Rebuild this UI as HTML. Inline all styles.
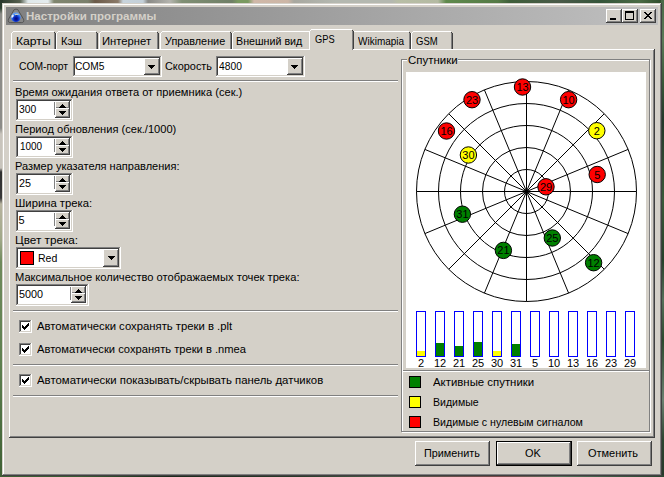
<!DOCTYPE html>
<html lang="ru"><head><meta charset="utf-8"><title>Настройки программы</title>
<style>
html,body{margin:0;padding:0}
body{width:664px;height:477px;overflow:hidden;position:relative;background:#6f7a62;font-family:"Liberation Sans", sans-serif;font-size:11px;color:#000}
.a{position:absolute}
.t{position:absolute;white-space:nowrap;line-height:14px;height:14px;transform-origin:0 50%}
svg{overflow:visible}
svg text{font-family:"Liberation Sans", sans-serif}
</style></head><body>
<div class="a" style="left:0;top:0;width:664px;height:477px;background:#4a6040"></div>
<div class="a" style="left:0;top:0;width:664px;height:4px;background:linear-gradient(to right,#2a382c 0,#566050 20px,#dfe8ea 28px,#e4ecee 48px,#80866f 54px,#7a806c 88px,#6b5a48 95px,#8a7a68 118px,#c8d4dc 123px,#c4d0d8 143px,#8a8a86 148px,#b4b4ae 170px,#808f74 182px,#6f7f66 232px,#7a9a60 238px,#7a9a60 248px,#d0b8a8 254px,#ccb6a6 288px,#a8a8a0 294px,#b4b8b0 335px,#b4b8b0 392px,#b8bea6 398px,#b4baa2 438px,#5f8a4c 446px,#557a46 498px,#3f5f3a 510px,#4a5a48 560px,#35553a 600px,#4a6a44 640px,#2c4a2a 664px)"></div>
<div class="a" style="left:0;top:0;width:3px;height:477px;background:linear-gradient(to bottom,#2a382c 0,#2c4030 8px,#8c8c88 14px,#8c8c88 128px,#c8c4bc 134px,#c8c4bc 168px,#303030 172px,#383838 198px,#b8b4a0 204px,#a0a888 240px,#6f8a5c 262px,#5f8050 360px,#3f6034 477px)"></div>
<div class="a" style="left:661px;top:0;width:3px;height:477px;background:linear-gradient(to bottom,#4a6a48 0,#5a7a58 40px,#3a5a3a 80px,#24382a 120px,#3a5a3a 200px,#26402a 260px,#55705a 300px,#2c4a2e 340px,#6a8070 400px,#2c4430 440px,#26382a 477px)"></div>
<div class="a" style="left:0;top:475px;width:664px;height:2px;background:linear-gradient(to right,#3f6034 0,#3a5a34 80px,#1c2a1c 170px,#2a3a2a 300px,#4a5a48 380px,#7a4a4a 500px,#55705a 560px,#2c4430 664px)"></div>
<div class="a" style="left:2px;top:3px;width:660px;height:473px;background:#d4d0c8;box-shadow:inset -1px -1px 0 #404040, inset 1px 1px 0 #d4d0c8, inset -2px -2px 0 #808080, inset 2px 2px 0 #ffffff;"></div>
<div class="a" style="left:6px;top:7px;width:652px;height:18px;background:linear-gradient(to right,#808080,#c0c0c0)"></div>
<svg class="a" style="left:8px;top:8px" width="16" height="16" viewBox="0 0 16 16"><defs><radialGradient id="gl" cx="0.52" cy="0.66" r="0.6"><stop offset="0" stop-color="#04086c"/><stop offset="0.35" stop-color="#0a1eb0"/><stop offset="0.7" stop-color="#2468f0"/><stop offset="1" stop-color="#6aa8fa"/></radialGradient></defs><path d="M4.9 3.8 Q5.6 1.1 8 1.1 Q10.4 1.1 11.1 3.8 L15.5 11.2 Q16.6 14.6 13.4 14.6 L2.6 14.6 Q-0.6 14.6 0.5 11.2 Z" fill="#868686" stroke="#484848" stroke-width="0.8"/><circle cx="7.9" cy="9.3" r="4.8" fill="url(#gl)"/><path d="M3.3 9.2 Q3.4 7.2 5 6.6 Q6 6.8 5.8 7.8 Q5.6 8.8 4.6 9.4 Q3.8 10 3.3 9.2Z" fill="#f4f8ff" opacity="0.95"/><path d="M6.4 6.3 Q8 5.6 10.4 6 Q11 6.6 10.2 7 Q9 6.6 8 7 Q7 7.2 6.4 6.3Z" fill="#e6e2c0" opacity="0.9"/><circle cx="8.7" cy="7.6" r="0.7" fill="#1a2a60" opacity="0.8"/></svg>
<div class="a" style="left:606px;top:9px;width:16px;height:14px;background:#d4d0c8;box-shadow:inset -1px -1px 0 #404040, inset 1px 1px 0 #ffffff, inset -2px -2px 0 #808080, inset 2px 2px 0 #d4d0c8;"></div>
<div class="a" style="left:622px;top:9px;width:16px;height:14px;background:#d4d0c8;box-shadow:inset -1px -1px 0 #404040, inset 1px 1px 0 #ffffff, inset -2px -2px 0 #808080, inset 2px 2px 0 #d4d0c8;"></div>
<div class="a" style="left:640px;top:9px;width:16px;height:14px;background:#d4d0c8;box-shadow:inset -1px -1px 0 #404040, inset 1px 1px 0 #ffffff, inset -2px -2px 0 #808080, inset 2px 2px 0 #d4d0c8;"></div>
<div class="a" style="left:610px;top:18px;width:6px;height:2px;background:#000"></div>
<div class="a" style="left:625px;top:11px;width:9px;height:9px;box-sizing:border-box;border:1px solid #000;border-top-width:2px"></div>
<svg class="a" style="left:644px;top:12px" width="8" height="7" viewBox="0 0 8 7" shape-rendering="crispEdges"><path d="M0 0h2v1h1v1h2v-1h1v-1h2v1h-1v1h-1v1h-1v1h1v1h1v1h1v1h-2v-1h-1v-1h-2v1h-1v1h-2v-1h1v-1h1v-1h1v-1h-1v-1h-1v-1h-1z" fill="#000"/></svg>
<div class="a" style="left:9px;top:49px;width:646px;height:389px;background:#d4d0c8;box-shadow:inset -1px -1px 0 #404040, inset 1px 1px 0 #ffffff, inset -2px -2px 0 #808080, inset 2px 2px 0 #d4d0c8;"></div>
<div class="a" style="left:11px;top:31px;width:45px;height:18px;z-index:1"><div class="a" style="left:2px;top:1px;right:2px;bottom:0;background:#d4d0c8"></div><div class="a" style="left:0;top:2px;width:1px;bottom:0px;background:#ffffff"></div><div class="a" style="left:1px;top:1px;width:1px;height:1px;background:#ffffff"></div><div class="a" style="left:1px;top:2px;width:1px;bottom:0;background:#d4d0c8"></div><div class="a" style="left:2px;top:0;right:2px;height:1px;background:#ffffff"></div><div class="a" style="right:1px;top:1px;width:1px;height:1px;background:#404040"></div><div class="a" style="right:0;top:2px;width:1px;bottom:0px;background:#404040"></div><div class="a" style="right:1px;top:2px;width:1px;bottom:0px;background:#808080"></div></div>
<div class="a" style="left:56px;top:31px;width:42px;height:18px;z-index:1"><div class="a" style="left:2px;top:1px;right:2px;bottom:0;background:#d4d0c8"></div><div class="a" style="left:0;top:2px;width:1px;bottom:0px;background:#ffffff"></div><div class="a" style="left:1px;top:1px;width:1px;height:1px;background:#ffffff"></div><div class="a" style="left:1px;top:2px;width:1px;bottom:0;background:#d4d0c8"></div><div class="a" style="left:2px;top:0;right:2px;height:1px;background:#ffffff"></div><div class="a" style="right:1px;top:1px;width:1px;height:1px;background:#404040"></div><div class="a" style="right:0;top:2px;width:1px;bottom:0px;background:#404040"></div><div class="a" style="right:1px;top:2px;width:1px;bottom:0px;background:#808080"></div></div>
<div class="a" style="left:99px;top:31px;width:60px;height:18px;z-index:1"><div class="a" style="left:2px;top:1px;right:2px;bottom:0;background:#d4d0c8"></div><div class="a" style="left:0;top:2px;width:1px;bottom:0px;background:#ffffff"></div><div class="a" style="left:1px;top:1px;width:1px;height:1px;background:#ffffff"></div><div class="a" style="left:1px;top:2px;width:1px;bottom:0;background:#d4d0c8"></div><div class="a" style="left:2px;top:0;right:2px;height:1px;background:#ffffff"></div><div class="a" style="right:1px;top:1px;width:1px;height:1px;background:#404040"></div><div class="a" style="right:0;top:2px;width:1px;bottom:0px;background:#404040"></div><div class="a" style="right:1px;top:2px;width:1px;bottom:0px;background:#808080"></div></div>
<div class="a" style="left:160px;top:31px;width:72px;height:18px;z-index:1"><div class="a" style="left:2px;top:1px;right:2px;bottom:0;background:#d4d0c8"></div><div class="a" style="left:0;top:2px;width:1px;bottom:0px;background:#ffffff"></div><div class="a" style="left:1px;top:1px;width:1px;height:1px;background:#ffffff"></div><div class="a" style="left:1px;top:2px;width:1px;bottom:0;background:#d4d0c8"></div><div class="a" style="left:2px;top:0;right:2px;height:1px;background:#ffffff"></div><div class="a" style="right:1px;top:1px;width:1px;height:1px;background:#404040"></div><div class="a" style="right:0;top:2px;width:1px;bottom:0px;background:#404040"></div><div class="a" style="right:1px;top:2px;width:1px;bottom:0px;background:#808080"></div></div>
<div class="a" style="left:232px;top:31px;width:79px;height:18px;z-index:1"><div class="a" style="left:2px;top:1px;right:2px;bottom:0;background:#d4d0c8"></div><div class="a" style="left:0;top:2px;width:1px;bottom:0px;background:#ffffff"></div><div class="a" style="left:1px;top:1px;width:1px;height:1px;background:#ffffff"></div><div class="a" style="left:1px;top:2px;width:1px;bottom:0;background:#d4d0c8"></div><div class="a" style="left:2px;top:0;right:2px;height:1px;background:#ffffff"></div><div class="a" style="right:1px;top:1px;width:1px;height:1px;background:#404040"></div><div class="a" style="right:0;top:2px;width:1px;bottom:0px;background:#404040"></div><div class="a" style="right:1px;top:2px;width:1px;bottom:0px;background:#808080"></div></div>
<div class="a" style="left:309px;top:29px;width:45px;height:22px;z-index:5"><div class="a" style="left:2px;top:1px;right:2px;bottom:0;background:#d4d0c8"></div><div class="a" style="left:0;top:2px;width:1px;bottom:2px;background:#ffffff"></div><div class="a" style="left:1px;top:1px;width:1px;height:1px;background:#ffffff"></div><div class="a" style="left:1px;top:2px;width:1px;bottom:0;background:#d4d0c8"></div><div class="a" style="left:2px;top:0;right:2px;height:1px;background:#ffffff"></div><div class="a" style="right:1px;top:1px;width:1px;height:1px;background:#404040"></div><div class="a" style="right:0;top:2px;width:1px;bottom:2px;background:#404040"></div><div class="a" style="right:1px;top:2px;width:1px;bottom:1px;background:#808080"></div></div>
<div class="a" style="left:352px;top:31px;width:59px;height:18px;z-index:1"><div class="a" style="left:2px;top:1px;right:2px;bottom:0;background:#d4d0c8"></div><div class="a" style="left:0;top:2px;width:1px;bottom:0px;background:#ffffff"></div><div class="a" style="left:1px;top:1px;width:1px;height:1px;background:#ffffff"></div><div class="a" style="left:1px;top:2px;width:1px;bottom:0;background:#d4d0c8"></div><div class="a" style="left:2px;top:0;right:2px;height:1px;background:#ffffff"></div><div class="a" style="right:1px;top:1px;width:1px;height:1px;background:#404040"></div><div class="a" style="right:0;top:2px;width:1px;bottom:0px;background:#404040"></div><div class="a" style="right:1px;top:2px;width:1px;bottom:0px;background:#808080"></div></div>
<div class="a" style="left:411px;top:31px;width:42px;height:18px;z-index:1"><div class="a" style="left:2px;top:1px;right:2px;bottom:0;background:#d4d0c8"></div><div class="a" style="left:0;top:2px;width:1px;bottom:0px;background:#ffffff"></div><div class="a" style="left:1px;top:1px;width:1px;height:1px;background:#ffffff"></div><div class="a" style="left:1px;top:2px;width:1px;bottom:0;background:#d4d0c8"></div><div class="a" style="left:2px;top:0;right:2px;height:1px;background:#ffffff"></div><div class="a" style="right:1px;top:1px;width:1px;height:1px;background:#404040"></div><div class="a" style="right:0;top:2px;width:1px;bottom:0px;background:#404040"></div><div class="a" style="right:1px;top:2px;width:1px;bottom:0px;background:#808080"></div></div>
<div class="a" style="left:73px;top:56px;width:89px;height:21px;background:#fff;box-shadow:inset -1px -1px 0 #ffffff, inset 1px 1px 0 #808080, inset -2px -2px 0 #d4d0c8, inset 2px 2px 0 #404040;"></div>
<div class="a" style="left:144px;top:58px;width:16px;height:17px;background:#d4d0c8;box-shadow:inset -1px -1px 0 #404040, inset 1px 1px 0 #ffffff, inset -2px -2px 0 #808080, inset 2px 2px 0 #d4d0c8;"></div>
<div class="a" style="left:148px;top:65px;width:7px;height:1px;background:#000"></div><div class="a" style="left:149px;top:66px;width:5px;height:1px;background:#000"></div><div class="a" style="left:150px;top:67px;width:3px;height:1px;background:#000"></div><div class="a" style="left:151px;top:68px;width:1px;height:1px;background:#000"></div>
<div class="a" style="left:216px;top:56px;width:89px;height:21px;background:#fff;box-shadow:inset -1px -1px 0 #ffffff, inset 1px 1px 0 #808080, inset -2px -2px 0 #d4d0c8, inset 2px 2px 0 #404040;"></div>
<div class="a" style="left:287px;top:58px;width:16px;height:17px;background:#d4d0c8;box-shadow:inset -1px -1px 0 #404040, inset 1px 1px 0 #ffffff, inset -2px -2px 0 #808080, inset 2px 2px 0 #d4d0c8;"></div>
<div class="a" style="left:291px;top:65px;width:7px;height:1px;background:#000"></div><div class="a" style="left:292px;top:66px;width:5px;height:1px;background:#000"></div><div class="a" style="left:293px;top:67px;width:3px;height:1px;background:#000"></div><div class="a" style="left:294px;top:68px;width:1px;height:1px;background:#000"></div>
<div class="a" style="left:13px;top:80px;width:385px;height:1px;background:#808080"></div>
<div class="a" style="left:13px;top:81px;width:385px;height:1px;background:#ffffff"></div>
<div class="a" style="left:16px;top:99px;width:57px;height:22px;background:#fff;box-shadow:inset -1px -1px 0 #ffffff, inset 1px 1px 0 #808080, inset -2px -2px 0 #d4d0c8, inset 2px 2px 0 #404040;"></div>
<div class="a" style="left:54px;top:102px;width:1px;height:13px;background:#808080"></div>
<div class="a" style="left:55px;top:101px;width:15px;height:8px;background:#d4d0c8;box-shadow:inset -1px -1px 0 #404040, inset 1px 1px 0 #ffffff, inset -2px -2px 0 #808080, inset 2px 2px 0 #d4d0c8;"></div>
<div class="a" style="left:55px;top:108px;width:15px;height:10px;background:#d4d0c8;box-shadow:inset -1px -1px 0 #404040, inset 1px 1px 0 #ffffff, inset -2px -2px 0 #808080, inset 2px 2px 0 #d4d0c8;"></div>
<div class="a" style="left:62px;top:104px;width:1px;height:1px;background:#000"></div><div class="a" style="left:61px;top:105px;width:3px;height:1px;background:#000"></div><div class="a" style="left:60px;top:106px;width:5px;height:1px;background:#000"></div><div class="a" style="left:59px;top:107px;width:7px;height:1px;background:#000"></div>
<div class="a" style="left:59px;top:111px;width:7px;height:1px;background:#000"></div><div class="a" style="left:60px;top:112px;width:5px;height:1px;background:#000"></div><div class="a" style="left:61px;top:113px;width:3px;height:1px;background:#000"></div><div class="a" style="left:62px;top:114px;width:1px;height:1px;background:#000"></div>
<div class="a" style="left:16px;top:136px;width:57px;height:22px;background:#fff;box-shadow:inset -1px -1px 0 #ffffff, inset 1px 1px 0 #808080, inset -2px -2px 0 #d4d0c8, inset 2px 2px 0 #404040;"></div>
<div class="a" style="left:54px;top:139px;width:1px;height:13px;background:#808080"></div>
<div class="a" style="left:55px;top:138px;width:15px;height:8px;background:#d4d0c8;box-shadow:inset -1px -1px 0 #404040, inset 1px 1px 0 #ffffff, inset -2px -2px 0 #808080, inset 2px 2px 0 #d4d0c8;"></div>
<div class="a" style="left:55px;top:145px;width:15px;height:10px;background:#d4d0c8;box-shadow:inset -1px -1px 0 #404040, inset 1px 1px 0 #ffffff, inset -2px -2px 0 #808080, inset 2px 2px 0 #d4d0c8;"></div>
<div class="a" style="left:62px;top:141px;width:1px;height:1px;background:#000"></div><div class="a" style="left:61px;top:142px;width:3px;height:1px;background:#000"></div><div class="a" style="left:60px;top:143px;width:5px;height:1px;background:#000"></div><div class="a" style="left:59px;top:144px;width:7px;height:1px;background:#000"></div>
<div class="a" style="left:59px;top:148px;width:7px;height:1px;background:#000"></div><div class="a" style="left:60px;top:149px;width:5px;height:1px;background:#000"></div><div class="a" style="left:61px;top:150px;width:3px;height:1px;background:#000"></div><div class="a" style="left:62px;top:151px;width:1px;height:1px;background:#000"></div>
<div class="a" style="left:16px;top:173px;width:57px;height:22px;background:#fff;box-shadow:inset -1px -1px 0 #ffffff, inset 1px 1px 0 #808080, inset -2px -2px 0 #d4d0c8, inset 2px 2px 0 #404040;"></div>
<div class="a" style="left:54px;top:176px;width:1px;height:13px;background:#808080"></div>
<div class="a" style="left:55px;top:175px;width:15px;height:8px;background:#d4d0c8;box-shadow:inset -1px -1px 0 #404040, inset 1px 1px 0 #ffffff, inset -2px -2px 0 #808080, inset 2px 2px 0 #d4d0c8;"></div>
<div class="a" style="left:55px;top:182px;width:15px;height:10px;background:#d4d0c8;box-shadow:inset -1px -1px 0 #404040, inset 1px 1px 0 #ffffff, inset -2px -2px 0 #808080, inset 2px 2px 0 #d4d0c8;"></div>
<div class="a" style="left:62px;top:178px;width:1px;height:1px;background:#000"></div><div class="a" style="left:61px;top:179px;width:3px;height:1px;background:#000"></div><div class="a" style="left:60px;top:180px;width:5px;height:1px;background:#000"></div><div class="a" style="left:59px;top:181px;width:7px;height:1px;background:#000"></div>
<div class="a" style="left:59px;top:185px;width:7px;height:1px;background:#000"></div><div class="a" style="left:60px;top:186px;width:5px;height:1px;background:#000"></div><div class="a" style="left:61px;top:187px;width:3px;height:1px;background:#000"></div><div class="a" style="left:62px;top:188px;width:1px;height:1px;background:#000"></div>
<div class="a" style="left:16px;top:210px;width:57px;height:22px;background:#fff;box-shadow:inset -1px -1px 0 #ffffff, inset 1px 1px 0 #808080, inset -2px -2px 0 #d4d0c8, inset 2px 2px 0 #404040;"></div>
<div class="a" style="left:54px;top:213px;width:1px;height:13px;background:#808080"></div>
<div class="a" style="left:55px;top:212px;width:15px;height:8px;background:#d4d0c8;box-shadow:inset -1px -1px 0 #404040, inset 1px 1px 0 #ffffff, inset -2px -2px 0 #808080, inset 2px 2px 0 #d4d0c8;"></div>
<div class="a" style="left:55px;top:219px;width:15px;height:10px;background:#d4d0c8;box-shadow:inset -1px -1px 0 #404040, inset 1px 1px 0 #ffffff, inset -2px -2px 0 #808080, inset 2px 2px 0 #d4d0c8;"></div>
<div class="a" style="left:62px;top:215px;width:1px;height:1px;background:#000"></div><div class="a" style="left:61px;top:216px;width:3px;height:1px;background:#000"></div><div class="a" style="left:60px;top:217px;width:5px;height:1px;background:#000"></div><div class="a" style="left:59px;top:218px;width:7px;height:1px;background:#000"></div>
<div class="a" style="left:59px;top:222px;width:7px;height:1px;background:#000"></div><div class="a" style="left:60px;top:223px;width:5px;height:1px;background:#000"></div><div class="a" style="left:61px;top:224px;width:3px;height:1px;background:#000"></div><div class="a" style="left:62px;top:225px;width:1px;height:1px;background:#000"></div>
<div class="a" style="left:16px;top:247px;width:105px;height:22px;background:#fff;box-shadow:inset -1px -1px 0 #ffffff, inset 1px 1px 0 #808080, inset -2px -2px 0 #d4d0c8, inset 2px 2px 0 #404040;"></div>
<div class="a" style="left:20px;top:251px;width:14px;height:14px;box-sizing:border-box;border:1px solid #000;background:#f00"></div>
<div class="a" style="left:103px;top:249px;width:16px;height:18px;background:#d4d0c8;box-shadow:inset -1px -1px 0 #404040, inset 1px 1px 0 #ffffff, inset -2px -2px 0 #808080, inset 2px 2px 0 #d4d0c8;"></div>
<div class="a" style="left:108px;top:256px;width:7px;height:1px;background:#000"></div><div class="a" style="left:109px;top:257px;width:5px;height:1px;background:#000"></div><div class="a" style="left:110px;top:258px;width:3px;height:1px;background:#000"></div><div class="a" style="left:111px;top:259px;width:1px;height:1px;background:#000"></div>
<div class="a" style="left:16px;top:284px;width:73px;height:22px;background:#fff;box-shadow:inset -1px -1px 0 #ffffff, inset 1px 1px 0 #808080, inset -2px -2px 0 #d4d0c8, inset 2px 2px 0 #404040;"></div>
<div class="a" style="left:70px;top:287px;width:1px;height:13px;background:#808080"></div>
<div class="a" style="left:71px;top:286px;width:15px;height:8px;background:#d4d0c8;box-shadow:inset -1px -1px 0 #404040, inset 1px 1px 0 #ffffff, inset -2px -2px 0 #808080, inset 2px 2px 0 #d4d0c8;"></div>
<div class="a" style="left:71px;top:293px;width:15px;height:10px;background:#d4d0c8;box-shadow:inset -1px -1px 0 #404040, inset 1px 1px 0 #ffffff, inset -2px -2px 0 #808080, inset 2px 2px 0 #d4d0c8;"></div>
<div class="a" style="left:78px;top:289px;width:1px;height:1px;background:#000"></div><div class="a" style="left:77px;top:290px;width:3px;height:1px;background:#000"></div><div class="a" style="left:76px;top:291px;width:5px;height:1px;background:#000"></div><div class="a" style="left:75px;top:292px;width:7px;height:1px;background:#000"></div>
<div class="a" style="left:75px;top:296px;width:7px;height:1px;background:#000"></div><div class="a" style="left:76px;top:297px;width:5px;height:1px;background:#000"></div><div class="a" style="left:77px;top:298px;width:3px;height:1px;background:#000"></div><div class="a" style="left:78px;top:299px;width:1px;height:1px;background:#000"></div>
<div class="a" style="left:13px;top:310px;width:385px;height:1px;background:#808080"></div>
<div class="a" style="left:13px;top:311px;width:385px;height:1px;background:#ffffff"></div>
<div class="a" style="left:19px;top:320px;width:13px;height:13px;background:#fff;box-shadow:inset -1px -1px 0 #ffffff, inset 1px 1px 0 #808080, inset -2px -2px 0 #d4d0c8, inset 2px 2px 0 #404040;"></div>
<svg class="a" style="left:22px;top:323px" width="7" height="7" viewBox="0 0 7 7"><path d="M0 2v3l2 2 5-5v-3l-5 5z" fill="#000" shape-rendering="crispEdges"/></svg>
<div class="a" style="left:19px;top:343px;width:13px;height:13px;background:#fff;box-shadow:inset -1px -1px 0 #ffffff, inset 1px 1px 0 #808080, inset -2px -2px 0 #d4d0c8, inset 2px 2px 0 #404040;"></div>
<svg class="a" style="left:22px;top:346px" width="7" height="7" viewBox="0 0 7 7"><path d="M0 2v3l2 2 5-5v-3l-5 5z" fill="#000" shape-rendering="crispEdges"/></svg>
<div class="a" style="left:13px;top:364px;width:385px;height:1px;background:#808080"></div>
<div class="a" style="left:13px;top:365px;width:385px;height:1px;background:#ffffff"></div>
<div class="a" style="left:19px;top:374px;width:13px;height:13px;background:#fff;box-shadow:inset -1px -1px 0 #ffffff, inset 1px 1px 0 #808080, inset -2px -2px 0 #d4d0c8, inset 2px 2px 0 #404040;"></div>
<svg class="a" style="left:22px;top:377px" width="7" height="7" viewBox="0 0 7 7"><path d="M0 2v3l2 2 5-5v-3l-5 5z" fill="#000" shape-rendering="crispEdges"/></svg>
<div class="a" style="left:13px;top:395px;width:385px;height:1px;background:#808080"></div>
<div class="a" style="left:13px;top:396px;width:385px;height:1px;background:#ffffff"></div>
<div class="a" style="left:401px;top:59px;width:249px;height:373px;box-sizing:border-box;border:1px solid #808080;box-shadow:1px 1px 0 #ffffff, inset 1px 1px 0 #ffffff"></div>
<div class="a" style="left:407px;top:53px;width:51px;height:13px;background:#d4d0c8"></div>
<div class="a" style="left:406px;top:72px;width:240px;height:296px;background:#fff"></div>
<svg class="a" style="left:406px;top:71px" width="242" height="299" viewBox="406 71 242 299"><g fill="none" stroke="#000" stroke-width="1"><circle cx="526.5" cy="191.5" r="22"/><circle cx="526.5" cy="191.5" r="44"/><circle cx="526.5" cy="191.5" r="66"/><circle cx="526.5" cy="191.5" r="88"/><circle cx="526.5" cy="191.5" r="110"/><line x1="526.5" y1="191.5" x2="636.50" y2="191.50"/><line x1="526.5" y1="191.5" x2="628.13" y2="149.40"/><line x1="526.5" y1="191.5" x2="604.28" y2="113.72"/><line x1="526.5" y1="191.5" x2="568.60" y2="89.87"/><line x1="526.5" y1="191.5" x2="526.50" y2="81.50"/><line x1="526.5" y1="191.5" x2="484.40" y2="89.87"/><line x1="526.5" y1="191.5" x2="448.72" y2="113.72"/><line x1="526.5" y1="191.5" x2="424.87" y2="149.40"/><line x1="526.5" y1="191.5" x2="416.50" y2="191.50"/><line x1="526.5" y1="191.5" x2="424.87" y2="233.60"/><line x1="526.5" y1="191.5" x2="448.72" y2="269.28"/><line x1="526.5" y1="191.5" x2="484.40" y2="293.13"/><line x1="526.5" y1="191.5" x2="526.50" y2="301.50"/><line x1="526.5" y1="191.5" x2="568.60" y2="293.13"/><line x1="526.5" y1="191.5" x2="604.28" y2="269.28"/><line x1="526.5" y1="191.5" x2="628.13" y2="233.60"/></g><circle cx="522.5" cy="87" r="8.2" fill="#ff0000" stroke="#000" stroke-width="1"/><text x="522.5" y="91" text-anchor="middle" font-size="11" font-family='"Liberation Sans", sans-serif' fill="#000">13</text><circle cx="472" cy="99.7" r="8.2" fill="#ff0000" stroke="#000" stroke-width="1"/><text x="472" y="103.7" text-anchor="middle" font-size="11" font-family='"Liberation Sans", sans-serif' fill="#000">23</text><circle cx="568.6" cy="99.7" r="8.2" fill="#ff0000" stroke="#000" stroke-width="1"/><text x="568.6" y="103.7" text-anchor="middle" font-size="11" font-family='"Liberation Sans", sans-serif' fill="#000">10</text><circle cx="446.5" cy="131" r="8.2" fill="#ff0000" stroke="#000" stroke-width="1"/><text x="446.5" y="135" text-anchor="middle" font-size="11" font-family='"Liberation Sans", sans-serif' fill="#000">16</text><circle cx="596.8" cy="130.7" r="8.2" fill="#ffff00" stroke="#000" stroke-width="1"/><text x="596.8" y="134.7" text-anchor="middle" font-size="11" font-family='"Liberation Sans", sans-serif' fill="#000">2</text><circle cx="468.4" cy="155" r="8.2" fill="#ffff00" stroke="#000" stroke-width="1"/><text x="468.4" y="159" text-anchor="middle" font-size="11" font-family='"Liberation Sans", sans-serif' fill="#000">30</text><circle cx="597.2" cy="174.5" r="8.2" fill="#ff0000" stroke="#000" stroke-width="1"/><text x="597.2" y="178.5" text-anchor="middle" font-size="11" font-family='"Liberation Sans", sans-serif' fill="#000">5</text><circle cx="546" cy="186.8" r="8.2" fill="#ff0000" stroke="#000" stroke-width="1"/><text x="546" y="190.8" text-anchor="middle" font-size="11" font-family='"Liberation Sans", sans-serif' fill="#000">29</text><circle cx="462.4" cy="214.2" r="8.2" fill="#008000" stroke="#000" stroke-width="1"/><text x="462.4" y="218.2" text-anchor="middle" font-size="11" font-family='"Liberation Sans", sans-serif' fill="#000">31</text><circle cx="503.4" cy="250.4" r="8.2" fill="#008000" stroke="#000" stroke-width="1"/><text x="503.4" y="254.4" text-anchor="middle" font-size="11" font-family='"Liberation Sans", sans-serif' fill="#000">21</text><circle cx="552.3" cy="238" r="8.2" fill="#008000" stroke="#000" stroke-width="1"/><text x="552.3" y="242" text-anchor="middle" font-size="11" font-family='"Liberation Sans", sans-serif' fill="#000">25</text><circle cx="593.6" cy="262.7" r="8.2" fill="#008000" stroke="#000" stroke-width="1"/><text x="593.6" y="266.7" text-anchor="middle" font-size="11" font-family='"Liberation Sans", sans-serif' fill="#000">12</text><rect x="416" y="351" width="10" height="5" fill="#ffff00"/><rect x="416.5" y="311.5" width="9" height="45" fill="none" stroke="#0000ff" stroke-width="1"/><text x="421" y="367" text-anchor="middle" font-size="11" font-family='"Liberation Sans", sans-serif' fill="#000">2</text><rect x="435" y="343" width="10" height="13" fill="#008000"/><rect x="435.5" y="311.5" width="9" height="45" fill="none" stroke="#0000ff" stroke-width="1"/><text x="440" y="367" text-anchor="middle" font-size="11" font-family='"Liberation Sans", sans-serif' fill="#000">12</text><rect x="454" y="346" width="10" height="10" fill="#008000"/><rect x="454.5" y="311.5" width="9" height="45" fill="none" stroke="#0000ff" stroke-width="1"/><text x="459" y="367" text-anchor="middle" font-size="11" font-family='"Liberation Sans", sans-serif' fill="#000">21</text><rect x="473" y="342" width="10" height="14" fill="#008000"/><rect x="473.5" y="311.5" width="9" height="45" fill="none" stroke="#0000ff" stroke-width="1"/><text x="478" y="367" text-anchor="middle" font-size="11" font-family='"Liberation Sans", sans-serif' fill="#000">25</text><rect x="492" y="351" width="10" height="5" fill="#ffff00"/><rect x="492.5" y="311.5" width="9" height="45" fill="none" stroke="#0000ff" stroke-width="1"/><text x="497" y="367" text-anchor="middle" font-size="11" font-family='"Liberation Sans", sans-serif' fill="#000">30</text><rect x="511" y="344" width="10" height="12" fill="#008000"/><rect x="511.5" y="311.5" width="9" height="45" fill="none" stroke="#0000ff" stroke-width="1"/><text x="516" y="367" text-anchor="middle" font-size="11" font-family='"Liberation Sans", sans-serif' fill="#000">31</text><rect x="530.5" y="311.5" width="9" height="45" fill="none" stroke="#0000ff" stroke-width="1"/><text x="535" y="367" text-anchor="middle" font-size="11" font-family='"Liberation Sans", sans-serif' fill="#000">5</text><rect x="549.5" y="311.5" width="9" height="45" fill="none" stroke="#0000ff" stroke-width="1"/><text x="554" y="367" text-anchor="middle" font-size="11" font-family='"Liberation Sans", sans-serif' fill="#000">10</text><rect x="568.5" y="311.5" width="9" height="45" fill="none" stroke="#0000ff" stroke-width="1"/><text x="573" y="367" text-anchor="middle" font-size="11" font-family='"Liberation Sans", sans-serif' fill="#000">13</text><rect x="587.5" y="311.5" width="9" height="45" fill="none" stroke="#0000ff" stroke-width="1"/><text x="592" y="367" text-anchor="middle" font-size="11" font-family='"Liberation Sans", sans-serif' fill="#000">16</text><rect x="606.5" y="311.5" width="9" height="45" fill="none" stroke="#0000ff" stroke-width="1"/><text x="611" y="367" text-anchor="middle" font-size="11" font-family='"Liberation Sans", sans-serif' fill="#000">23</text><rect x="625.5" y="311.5" width="9" height="45" fill="none" stroke="#0000ff" stroke-width="1"/><text x="630" y="367" text-anchor="middle" font-size="11" font-family='"Liberation Sans", sans-serif' fill="#000">29</text></svg>
<div class="a" style="left:403px;top:370px;width:246px;height:1px;background:#808080"></div>
<div class="a" style="left:403px;top:371px;width:246px;height:1px;background:#ffffff"></div>
<div class="a" style="left:409px;top:376px;width:12px;height:12px;box-sizing:border-box;border:1px solid #000;background:#008000"></div>
<div class="a" style="left:409px;top:396px;width:12px;height:12px;box-sizing:border-box;border:1px solid #000;background:#ffff00"></div>
<div class="a" style="left:409px;top:416px;width:12px;height:12px;box-sizing:border-box;border:1px solid #000;background:#ff0000"></div>
<div class="a" style="left:415px;top:441px;width:75px;height:25px;background:#d4d0c8;box-shadow:inset -1px -1px 0 #404040, inset 1px 1px 0 #ffffff, inset -2px -2px 0 #808080, inset 2px 2px 0 #d4d0c8;"></div>
<div class="a" style="left:496px;top:441px;width:76px;height:25px;background:#000"></div>
<div class="a" style="left:497px;top:442px;width:74px;height:23px;background:#d4d0c8;box-shadow:inset -1px -1px 0 #404040, inset 1px 1px 0 #ffffff, inset -2px -2px 0 #808080, inset 2px 2px 0 #d4d0c8;"></div>
<div class="a" style="left:577px;top:441px;width:75px;height:25px;background:#d4d0c8;box-shadow:inset -1px -1px 0 #404040, inset 1px 1px 0 #ffffff, inset -2px -2px 0 #808080, inset 2px 2px 0 #d4d0c8;"></div>
<span class="t" id="t0" style="left:26.42px;top:9px;font-weight:bold;color:#d4d0c8;transform:scaleX(1.0491)">Настройки программы</span>
<span class="t" id="t1" style="left:15.52px;top:34px;z-index:6;transform:scaleX(1.1067)">Карты</span>
<span class="t" id="t2" style="left:60.5px;top:34px;z-index:6;transform:scaleX(1.0051)">Кэш</span>
<span class="t" id="t3" style="left:102.48px;top:34px;z-index:6;transform:scaleX(1.0234)">Интернет</span>
<span class="t" id="t4" style="left:164.72px;top:34px;z-index:6;transform:scaleX(0.9842)">Управление</span>
<span class="t" id="t5" style="left:236.3px;top:34px;z-index:6;transform:scaleX(0.9719)">Внешний вид</span>
<span class="t" id="t6" style="left:315.33px;top:32px;z-index:6;transform:scaleX(0.8449)">GPS</span>
<span class="t" id="t7" style="left:357.82px;top:34px;z-index:6;transform:scaleX(0.9089)">Wikimapia</span>
<span class="t" id="t8" style="left:416.1px;top:34px;z-index:6;transform:scaleX(0.8632)">GSM</span>
<span class="t" id="t9" style="left:18.5px;top:59px;;transform:scaleX(0.9372)">COM-порт</span>
<span class="t" id="t10" style="left:75.3px;top:59px;;transform:scaleX(0.9258)">COM5</span>
<span class="t" id="t11" style="left:164.7px;top:59px;;transform:scaleX(0.9892)">Скорость</span>
<span class="t" id="t12" style="left:219.23px;top:59px;;transform:scaleX(0.9333)">4800</span>
<span class="t" id="t13" style="left:15.25px;top:85px;;transform:scaleX(1.0101)">Время ожидания ответа от приемника (сек.)</span>
<span class="t" id="t14" style="left:19.05px;top:102px;;transform:scaleX(0.9371)">300</span>
<span class="t" id="t15" style="left:15.3px;top:122px;;transform:scaleX(1.0085)">Период обновления (сек./1000)</span>
<span class="t" id="t16" style="left:19.85px;top:139px;;transform:scaleX(0.9021)">1000</span>
<span class="t" id="t17" style="left:15.15px;top:159px;;transform:scaleX(1.0018)">Размер указателя направления:</span>
<span class="t" id="t18" style="left:18.5px;top:176px;;transform:scaleX(0.9778)">25</span>
<span class="t" id="t19" style="left:15.3px;top:196px;;transform:scaleX(1.0251)">Ширина трека:</span>
<span class="t" id="t20" style="left:18.62px;top:213px;">5</span>
<span class="t" id="t21" style="left:15.15px;top:233px;;transform:scaleX(1.0661)">Цвет трека:</span>
<span class="t" id="t22" style="left:37.95px;top:251px;;transform:scaleX(0.9579)">Red</span>
<span class="t" id="t23" style="left:15.28px;top:270px;;transform:scaleX(1.0127)">Максимальное количество отображаемых точек трека:</span>
<span class="t" id="t24" style="left:18.73px;top:287px;;transform:scaleX(0.9811)">5000</span>
<span class="t" id="t25" style="left:36.5px;top:319px;;transform:scaleX(1.0271)">Автоматически сохранять треки в .plt</span>
<span class="t" id="t26" style="left:36.57px;top:342px;;transform:scaleX(1.0148)">Автоматически сохранять треки в .nmea</span>
<span class="t" id="t27" style="left:36.55px;top:373px;;transform:scaleX(1.0354)">Автоматически показывать/скрывать панель датчиков</span>
<span class="t" id="t28" style="left:408.35px;top:53px;;transform:scaleX(1.0409)">Спутники</span>
<span class="t" id="t29" style="left:433.42px;top:375px;;transform:scaleX(1.0357)">Активные спутники</span>
<span class="t" id="t30" style="left:433.0px;top:395px;;transform:scaleX(0.9591)">Видимые</span>
<span class="t" id="t31" style="left:433.0px;top:415px;;transform:scaleX(0.9634)">Видимые с нулевым сигналом</span>
<span class="t" id="t32" style="left:423.58px;top:446px;;transform:scaleX(0.983)">Применить</span>
<span class="t" id="t33" style="left:524.65px;top:446px;;transform:scaleX(0.9933)">OK</span>
<span class="t" id="t34" style="left:588.33px;top:446px;;transform:scaleX(0.996)">Отменить</span>
</body></html>
